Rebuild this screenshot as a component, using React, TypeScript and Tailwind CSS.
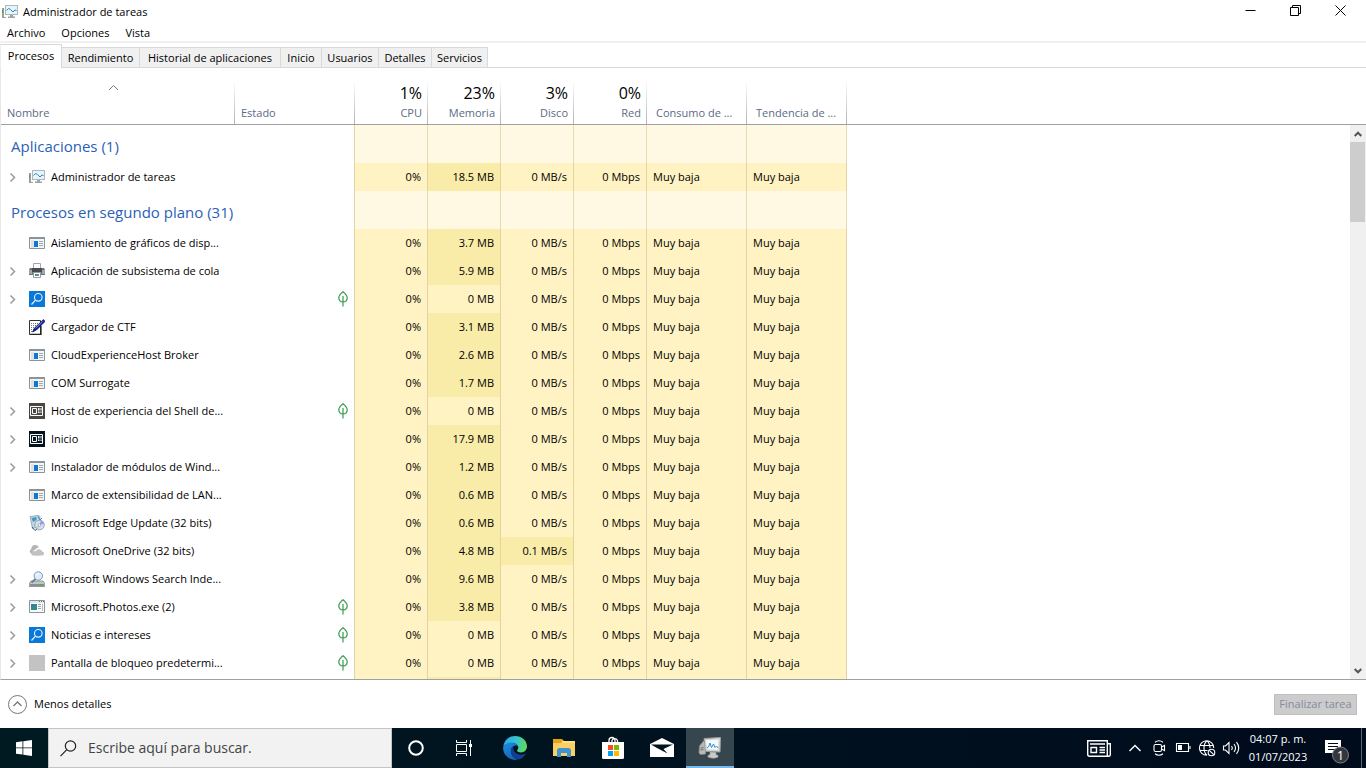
import { useState, type ReactNode } from 'react';
import clsx from 'clsx';

type IconName =
  | 'taskmgr' | 'app' | 'printer' | 'search' | 'ctf' | 'shell' | 'start'
  | 'update' | 'cloud' | 'indexer' | 'photos' | 'blank';

type Process = {
  name: string;
  icon: IconName;
  expandable?: boolean;
  suspended?: boolean;
  memory: string;
  disk?: string;
};

const MENUS = ['Archivo', 'Opciones', 'Vista'];

const TABS = [
  { label: 'Procesos', width: 'w-[62px]' },
  { label: 'Rendimiento', width: 'w-[78px]' },
  { label: 'Historial de aplicaciones', width: 'w-[141px]' },
  { label: 'Inicio', width: 'w-[41px]' },
  { label: 'Usuarios', width: 'w-[57px]' },
  { label: 'Detalles', width: 'w-[53px]' },
  { label: 'Servicios', width: 'w-[56px]' },
];

const USAGE = [
  { total: '1%', label: 'CPU' },
  { total: '23%', label: 'Memoria' },
  { total: '3%', label: 'Disco' },
  { total: '0%', label: 'Red' },
];

const APPS: Process[] = [
  { name: 'Administrador de tareas', icon: 'taskmgr', expandable: true, memory: '18.5 MB' },
];

const BACKGROUND: Process[] = [
  { name: 'Aislamiento de gráficos de disp...', icon: 'app', memory: '3.7 MB' },
  { name: 'Aplicación de subsistema de cola', icon: 'printer', expandable: true, memory: '5.9 MB' },
  { name: 'Búsqueda', icon: 'search', expandable: true, suspended: true, memory: '0 MB' },
  { name: 'Cargador de CTF', icon: 'ctf', memory: '3.1 MB' },
  { name: 'CloudExperienceHost Broker', icon: 'app', memory: '2.6 MB' },
  { name: 'COM Surrogate', icon: 'app', memory: '1.7 MB' },
  { name: 'Host de experiencia del Shell de...', icon: 'shell', expandable: true, suspended: true, memory: '0 MB' },
  { name: 'Inicio', icon: 'start', expandable: true, memory: '17.9 MB' },
  { name: 'Instalador de módulos de Wind...', icon: 'app', expandable: true, memory: '1.2 MB' },
  { name: 'Marco de extensibilidad de LAN...', icon: 'app', memory: '0.6 MB' },
  { name: 'Microsoft Edge Update (32 bits)', icon: 'update', memory: '0.6 MB' },
  { name: 'Microsoft OneDrive (32 bits)', icon: 'cloud', memory: '4.8 MB', disk: '0.1 MB/s' },
  { name: 'Microsoft Windows Search Inde...', icon: 'indexer', expandable: true, memory: '9.6 MB' },
  { name: 'Microsoft.Photos.exe (2)', icon: 'photos', expandable: true, suspended: true, memory: '3.8 MB' },
  { name: 'Noticias e intereses', icon: 'search', expandable: true, suspended: true, memory: '0 MB' },
  { name: 'Pantalla de bloqueo predetermi...', icon: 'blank', expandable: true, suspended: true, memory: '0 MB' },
];

function ProcessIcon({ name }: { name: IconName }) {
  return (
    <svg className="h-4 w-4 shrink-0" viewBox="0 0 16 16" aria-hidden="true">
      {name === 'taskmgr' && (
        <>
          <path d="M0 4h2v10H0z" fill="#9aa197" />
          <path d="M0 6h1v3H0z" fill="#4f9a58" />
          <path d="M2 13h2v1H2z" fill="#9aa197" />
          <path d="M3 1h13v10H3z" fill="#b3b6b8" />
          <path d="M4 2h11v8H4z" fill="#e4f6fc" />
          <path d="m4.500 6.500 2-2 2 1 2.500 2.500 2-2 1.500.5" fill="none" stroke="#2a86b5" />
          <path d="M8 11h3v1.500h2V14H6v-1.500h2z" fill="#a1a4a6" />
        </>
      )}
      {name === 'app' && (
        <>
          <path d="M.5 2.500h15v11H.5z" fill="#f3f4f5" stroke="#8b949b" />
          <path d="M0 2h16v2H0z" fill="#8b949b" />
          <path d="M2 5h3v8H2z" fill="#dfe3e6" />
          <path d="M5 6h4v6H5z" fill="#0f78d0" />
          <path d="M10 6.500h4M10 8.500h4M10 10.500h4" stroke="#a4abb0" />
        </>
      )}
      {name === 'printer' && (
        <>
          <path d="M4.500.5h7v5h-7z" fill="#fafafa" stroke="#a5a5a5" />
          <path d="M1 5h14l1 2v5H0V7z" fill="#6f7276" />
          <path d="M0 7h3v4H0zM13 7h3v4h-3z" fill="#a3a6a9" />
          <path d="M3 5h10v4H3z" fill="#484b4f" />
          <path d="M4.500 9.500h7v5h-7z" fill="#fff" stroke="#9a9a9a" />
          <path d="M6 11h2v2H6z" fill="#2f9e8b" />
          <path d="M8 11h2v2H8z" fill="#5a8fd0" />
        </>
      )}
      {name === 'search' && (
        <>
          <path d="M0 0h16v16H0z" fill="#0a78d7" />
          <circle cx="9.300" cy="6.300" r="3.800" fill="none" stroke="#e9f5ff" strokeWidth="1.100" />
          <path d="m6.500 9.200-4 4.300" stroke="#e9f5ff" strokeWidth="1.200" />
        </>
      )}
      {name === 'ctf' && (
        <>
          <path d="M.5 1.500h11v14H.5z" fill="#fff" stroke="#333" />
          <path d="M2 4.500h8M2 6.500h7M2 8.500h6M2 10.500h4M2 12.500h3" stroke="#777" strokeDasharray="1 1" />
          <path d="M12 7v8.500H1" fill="none" stroke="#222" strokeWidth="1.300" />
          <path d="M14.500.5 16 2.500 7.500 11 3.500 13l2-4z" fill="#15259e" stroke="#0a1045" strokeWidth=".7" />
          <path d="m13.500 2.500-7 6.700" stroke="#6f8cf0" />
        </>
      )}
      {(name === 'shell' || name === 'start') && (
        <>
          <path d="M0 0h16v16H0z" fill={name === 'shell' ? '#4a4644' : '#03141f'} />
          <path d="M1.500 3.500h12v9h-12z" fill="none" stroke="#fff" />
          <path d="M3.500 5.500h4v5h-4z" fill="none" stroke="#fff" />
          <path d="M9 5h1.500v2.500H9zM11.500 5h1v2.500h-1zM9 8.500h1.500V10H9zM11.500 8.500h1V10h-1z" fill="#fff" />
        </>
      )}
      {name === 'update' && (
        <>
          <path d="M1 1.500 9 .5l2 1-.5 10-7 2z" fill="#c4d7e8" stroke="#7a93ad" strokeWidth=".7" />
          <path d="m2.500 3 5-1v3L4 7z" fill="#3c9fb0" />
          <path d="M9 1.500 11 5l2-2" fill="none" stroke="#3b80c4" />
          <circle cx="10.500" cy="10" r="4.800" fill="#d9dff1" stroke="#8791a8" strokeWidth=".8" />
          <path d="M10.500 10 12 5.500a5 5 0 0 1 3 3z" fill="#8f9ce6" />
          <path d="m10.500 10-4 2.500a5 5 0 0 0 2.500 2z" fill="#a4dbc0" />
          <circle cx="10.500" cy="10" r="1.300" fill="#fff" stroke="#7e8aa3" strokeWidth=".6" />
          <path d="m3 12 3 3.500L8 14" fill="none" stroke="#465879" />
        </>
      )}
      {name === 'cloud' && (
        <>
          <path d="M2 10.500a2.500 2.500 0 0 1 .3-4.500A4 4 0 0 1 10 4.500c-2.500 0-3.500 1.500-3.800 2.500C4 7 3.500 9 4 10.500z" fill="#b5b5b5" />
          <path d="M6.500 12.500a2.300 2.300 0 0 1 .4-4.600 3.500 3.500 0 0 1 6.300.7 2 2 0 0 1 .5 3.900z" fill="#c1c1c1" />
          <path d="M3.500 12.500a2 2 0 0 1 2-4h5v4z" fill="#c1c1c1" />
        </>
      )}
      {name === 'indexer' && (
        <>
          <path d="M2 10h12l2 3v2.500H0V13z" fill="#c3c6c9" stroke="#73787b" strokeWidth=".7" />
          <path d="M1 13h14v2H1z" fill="#8b9093" />
          <path d="M11 13h3v2h-3z" fill="#47b649" />
          <circle cx="9.300" cy="5" r="4.200" fill="#dceefb" stroke="#8197ae" />
          <path d="M6.500 8 2.500 11.500" stroke="#6d7f91" strokeWidth="1.800" />
          <path d="M7 4.500a2.500 2.500 0 0 1 3-1.800" fill="none" stroke="#fff" />
        </>
      )}
      {name === 'photos' && (
        <>
          <path d="M.5 1.500h15v12H.5z" fill="#fbfbfb" stroke="#8b949b" />
          <path d="M1 2h14v2H1z" fill="#e3e7ea" />
          <path d="M10 2.500h1M12 2.500h1M14 2.500h1" stroke="#6a747c" />
          <path d="M2 5h6v6H2z" fill="#2f8f86" />
          <path d="M2 5h3v3H2z" fill="#4173a8" />
          <path d="M9 5.500h3M9 7.500h3M9 9.500h3" stroke="#9ca4aa" />
          <path d="M13.500 5v7" stroke="#b9bec2" />
        </>
      )}
      {name === 'blank' && <path d="M0 0h16v16H0z" fill="#c3c3c3" />}
    </svg>
  );
}

function Leaf() {
  return (
    <svg className="h-4 w-3" viewBox="0 0 12 16" fill="none" stroke="#3a9a4c" strokeWidth="1.200" role="img" aria-label="Suspendido">
      <path d="M6 .8c2.500 2 4.200 3.600 4.200 6C10.200 9.300 8.500 11 6 11S1.800 9.300 1.800 6.800c0-2.400 1.700-4 4.200-6zM6 5v10.500" />
    </svg>
  );
}

function WindowButton({ label, children }: { label: string; children: ReactNode }) {
  return (
    <button type="button" aria-label={label} className="flex h-5 w-[45px] items-center justify-center hover:bg-gray-200">
      <svg width="11" height="11" viewBox="0 0 11 11" fill="none" stroke="#000">{children}</svg>
    </button>
  );
}

function GroupRow({ title }: { title: string }) {
  return (
    <tr className="h-[38px]">
      <th scope="rowgroup" colSpan={2} className="border-r border-[#e2d3a2] pt-1 pl-[10px] text-left text-[15px] leading-5 font-normal text-[#2b5fb8]">
        {title}
      </th>
      {[0, 1, 2, 3, 4, 5].map((i) => (
        <td key={i} className="border-r border-[#e8dbb4] bg-[#fff8e3]" />
      ))}
      <td />
    </tr>
  );
}

const cell = 'border-r border-[#e2d3a2] px-[6px] whitespace-nowrap';

function ProcessRow({ process }: { process: Process }) {
  const { name, icon, expandable, suspended, memory, disk = '0 MB/s' } = process;
  return (
    <tr className="h-7 hover:bg-[#e5f3ff]">
      <td>
        <div className="flex items-center overflow-hidden whitespace-nowrap">
          <div className="flex w-7 shrink-0 pl-2">
            {expandable && (
              <button type="button" aria-label={`Expandir ${name}`} className="text-[#9a9a9a]">
                <svg width="7" height="11" viewBox="0 0 7 11" fill="none" stroke="currentColor" strokeWidth="1.500">
                  <path d="M1.500 1.500 5.500 5.500l-4 4" />
                </svg>
              </button>
            )}
          </div>
          <ProcessIcon name={icon} />
          <span className="pl-[6px]">{name}</span>
        </div>
      </td>
      <td className="border-r border-[#e2d3a2] pr-[5px]">
        <div className="flex justify-end">{suspended && <Leaf />}</div>
      </td>
      <td className={clsx(cell, 'bg-[#fff3c4] text-right')}>0%</td>
      <td className={clsx(cell, 'text-right', memory === '0 MB' ? 'bg-[#fff3c4]' : 'bg-[#f9eba8]')}>{memory}</td>
      <td className={clsx(cell, 'text-right', disk === '0 MB/s' ? 'bg-[#fff3c4]' : 'bg-[#f9eba8]')}>{disk}</td>
      <td className={clsx(cell, 'bg-[#fff3c4] text-right')}>0 Mbps</td>
      <td className={clsx(cell, 'bg-[#fff3c4]')}>Muy baja</td>
      <td className={clsx(cell, 'bg-[#fff3c4]')}>Muy baja</td>
      <td />
    </tr>
  );
}

const head =
  'border-b border-b-[#a0a0a0] bg-linear-to-b from-white to-[#b4b4b4] bg-[length:1px_44px] bg-[position:right_bottom] bg-no-repeat pb-[3px] align-bottom font-normal text-[#5a6b85] whitespace-nowrap leading-4';

function ProcessTable() {
  return (
    <table className="w-full table-fixed border-separate border-spacing-0">
      <colgroup>
        <col className="w-[234px]" />
        <col className="w-[120px]" />
        <col className="w-[73px]" />
        <col className="w-[73px]" />
        <col className="w-[73px]" />
        <col className="w-[73px]" />
        <col className="w-[100px]" />
        <col className="w-[100px]" />
        <col />
      </colgroup>
      <thead>
        <tr className="h-[57px]">
          <th scope="col" aria-sort="ascending" className={head}>
            <button type="button" className="flex w-full flex-col pl-[6px] text-left">
              <svg className="mb-[14px] ml-[101px] text-[#7a7a7a]" width="11" height="7" viewBox="0 0 11 7" fill="none" stroke="currentColor">
                <path d="M1 6 5.500 1.500 10 6" />
              </svg>
              Nombre
            </button>
          </th>
          <th scope="col" className={clsx(head, 'pl-[6px] text-left')}>Estado</th>
          {USAGE.map(({ total, label }) => (
            <th key={label} scope="col" className={clsx(head, 'pr-[6px] text-right')}>
              <div className="pb-[2px] text-[16px] leading-5 text-black">{total}</div>
              {label}
            </th>
          ))}
          <th scope="col" className={clsx(head, 'pl-[9px] text-left')}>Consumo de ...</th>
          <th scope="col" className={clsx(head, 'pl-[9px] text-left')}>Tendencia de ...</th>
          <td className="border-b border-[#a0a0a0]" />
        </tr>
      </thead>
      <tbody>
        <GroupRow title="Aplicaciones (1)" />
        {APPS.map((p) => <ProcessRow key={p.name} process={p} />)}
        <GroupRow title="Procesos en segundo plano (31)" />
        {BACKGROUND.map((p) => <ProcessRow key={p.name} process={p} />)}
        {/* top edge of the next row */}
        <tr className="h-7">
          <td />
          <td className={cell} />
          <td className={clsx(cell, 'bg-[#fff3c4]')} />
          <td className={clsx(cell, 'bg-[#f9eba8]')} />
          <td className={clsx(cell, 'bg-[#fff3c4]')} />
          <td className={clsx(cell, 'bg-[#fff3c4]')} />
          <td className={clsx(cell, 'bg-[#fff3c4]')} />
          <td className={clsx(cell, 'bg-[#fff3c4]')} />
          <td />
        </tr>
      </tbody>
    </table>
  );
}

function Scrollbar() {
  return (
    <div className="flex w-4 shrink-0 flex-col">
      <div className="h-[57px] border-b border-[#a0a0a0]" />
      <div className="flex flex-1 flex-col bg-[#f0f0f0]">
        <button type="button" aria-label="Subir" className="flex h-[17px] items-center justify-center text-[#555]">
          <svg width="8" height="6" viewBox="0 0 8 6" fill="none" stroke="currentColor" strokeWidth="2"><path d="m.7 5 3.300-3.300L7.300 5" /></svg>
        </button>
        <div className="mr-px h-20 bg-[#cdcdcd]" />
        <button type="button" aria-label="Bajar" className="mt-auto flex h-[17px] items-center justify-center text-[#555]">
          <svg width="8" height="6" viewBox="0 0 8 6" fill="none" stroke="currentColor" strokeWidth="2"><path d="M.7 1 4 4.300 7.300 1" /></svg>
        </button>
      </div>
    </div>
  );
}

function EdgeLogo() {
  return (
    <svg width="24" height="24" viewBox="0 0 24 24" aria-hidden="true">
      <defs>
        <linearGradient id="edge-top" x1="0" y1=".3" x2="1" y2=".5">
          <stop offset="0" stopColor="#2ba8e6" />
          <stop offset=".5" stopColor="#34c3d3" />
          <stop offset="1" stopColor="#62d957" />
        </linearGradient>
        <linearGradient id="edge-left" x1="0" y1="0" x2=".6" y2="1">
          <stop offset="0" stopColor="#1d8fe0" />
          <stop offset="1" stopColor="#1464b8" />
        </linearGradient>
      </defs>
      <path d="M.2 10.800C1 4.500 6 0 12 0c6.800 0 12 4.700 12 10.200 0 3.700-2.700 6.200-6 6.200-2.600 0-4-.9-4-1.800 0-.8 1.300-1.200 1.300-3.200 0-2.400-2.700-4.300-6.100-4.300-4 0-7.400 1.700-9 3.700z" fill="url(#edge-top)" />
      <path d="M.1 11.300C1 8.500 4.600 6.600 8.300 6.600c3.700 0 6.500 2 7 4.500-1-1.500-2.600-1.800-3.700-1.300C8.800 10.600 7.600 13 8 16c.4 3.500 3.200 6.700 6.800 7.600A12 12 0 0 1 .1 11.300z" fill="url(#edge-left)" />
      <path d="M11.600 9.800C8.800 10.600 7.600 13 8 16c.5 4 3.800 7.400 7.700 7.400 2.900-.6 5.500-2.700 6.800-5.100.2-.4-.1-.7-.5-.5-5 2.300-10.500-.1-11.600-4.300-.3-1.500.1-2.900 1.200-3.700z" fill="#123f91" />
    </svg>
  );
}

function FolderIcon() {
  return (
    <svg width="22" height="20" viewBox="0 0 22 20" aria-hidden="true">
      <path d="M0 1h9l2 2h11v15H0z" fill="#e8a317" />
      <path d="M9 3h13v2H9z" fill="#ffdf8c" />
      <path d="M0 5h22v13H0z" fill="#fad061" />
      <path d="M4 19v-6.500C4 11 5 10 6.500 10h9c1.500 0 2.500 1 2.500 2.500V19h-4v-4H8v4z" fill="#3f93d3" />
    </svg>
  );
}

function StoreIcon() {
  return (
    <svg width="24" height="24" viewBox="0 0 24 24" aria-hidden="true">
      <path d="M8 7V4.500a3 3 0 0 1 6 0V7M11 7V4.500a3 3 0 0 1 5.500 0V7" fill="none" stroke="#fff" strokeWidth="1.300" />
      <path d="M1 6h22v15.500q0 1.500-1.500 1.500h-19Q1 23 1 21.500z" fill="#fff" />
      <path d="M7 9h5v5H7z" fill="#f25022" />
      <path d="M13 9h5v5h-5z" fill="#7fba00" />
      <path d="M7 15h5v5H7z" fill="#00a4ef" />
      <path d="M13 15h5v5h-5z" fill="#ffb900" />
    </svg>
  );
}

function MailIcon() {
  return (
    <svg width="24" height="20" viewBox="0 0 24 20" aria-hidden="true">
      <path d="M0 6 12 0l12 6v13H0z" fill="#fff" />
      <path d="M1 6.500h22l-9.500 4.500 4 4.500L7 10z" fill="#00141f" />
    </svg>
  );
}

function MonitorIcon() {
  return (
    <svg width="24" height="22" viewBox="0 0 24 22" aria-hidden="true">
      <path d="m1.500 9 4-5 2 1v12l-5 .5L1 16z" fill="#b9bab8" stroke="#8e8f8d" strokeWidth=".7" />
      <path d="m2.500 11 3-.5M2.500 13l3-.5" stroke="#70716f" />
      <path d="m6 1.500 16.500-1L22 15l-14.500-.7z" fill="#d5d7d7" stroke="#9b9d9d" />
      <path d="m8 3.200 12.500-.7-.4 10.200-11-.4z" fill="#f1fafd" />
      <path d="m9 11 1.500-1L12 6l1.500 4.500L15.500 7l1.500 3.500 1.500-1.500 1.500 2" fill="none" stroke="#3c8fc4" />
      <path d="m12 15 6 .3v2.500c2 0 2.500 1 2 2.200-3 1.700-8 1.500-10 0-.5-1.200 0-2 2-2.200z" fill="#c9cbca" stroke="#959796" strokeWidth=".6" />
    </svg>
  );
}

function TaskButton({ label, active, children }: { label: string; active?: boolean; children: ReactNode }) {
  return (
    <button
      type="button"
      aria-label={label}
      className={clsx(
        'flex h-10 items-center justify-center',
        active ? 'w-12 border-y-2 border-t-transparent border-b-[#76b9ed] bg-[#36464e]' : 'w-[49px] hover:bg-white/10'
      )}
    >
      {children}
    </button>
  );
}

function TrayButton({ label, children }: { label: string; children: ReactNode }) {
  return (
    <button type="button" aria-label={label} className="flex h-10 w-6 items-center justify-center hover:bg-white/10">
      <svg width="18" height="18" viewBox="0 0 18 18" fill="none" stroke="#fff" strokeWidth="1.100">{children}</svg>
    </button>
  );
}

function Taskbar() {
  return (
    <footer className="flex h-10 shrink-0 bg-linear-to-r from-[#001a22] via-[#00121f] to-[#000b1c] text-white">
      <button type="button" aria-label="Inicio" className="flex w-12 shrink-0 items-center justify-center">
        <svg width="16" height="16" viewBox="0 0 16 16" fill="#fff">
          <path d="M0 2.200 6.500 1.300v6.200H0zM7.300 1.200 16 0v7.500H7.300zM0 8.300h6.500v6.300L0 13.700zM7.300 8.300H16V16l-8.700-1.200z" />
        </svg>
      </button>
      <label className="flex w-[344px] items-center border border-[#c4c4c4] bg-[#f2f2f2]">
        <svg className="mr-[11px] ml-[11px] shrink-0" width="17" height="17" viewBox="0 0 17 17" fill="none" stroke="#222" strokeWidth="1.200">
          <circle cx="10.500" cy="6" r="5.200" />
          <path d="m6.800 9.700-6.300 6.500" />
        </svg>
        <input
          type="text"
          aria-label="Buscar"
          placeholder="Escribe aquí para buscar."
          className="min-w-0 flex-1 bg-transparent text-[14px] text-[#333] outline-none placeholder:text-[#444]"
        />
      </label>
      <button type="button" aria-label="Cortana" className="flex w-12 items-center justify-center">
        <svg width="18" height="18" viewBox="0 0 18 18" fill="none">
          <circle cx="9" cy="9" r="6.800" stroke="#fff" strokeWidth="2" />
        </svg>
      </button>
      <button type="button" aria-label="Vista de tareas" className="mr-[2px] flex w-12 items-center justify-center">
        <svg width="17" height="16" viewBox="0 0 17 16" fill="none" stroke="#fff">
          <path d="M.5 0v2.500h10V0M.5 16v-2.500h10V16M.5 4.500h10v7H.5zM14.500 0v16" />
          <path d="M13 4h3v3h-3z" fill="#fff" stroke="none" />
        </svg>
      </button>
      <TaskButton label="Microsoft Edge"><EdgeLogo /></TaskButton>
      <TaskButton label="Explorador de archivos"><FolderIcon /></TaskButton>
      <TaskButton label="Microsoft Store"><StoreIcon /></TaskButton>
      <TaskButton label="Correo"><MailIcon /></TaskButton>
      <TaskButton label="Administrador de tareas" active><MonitorIcon /></TaskButton>

      <div className="ml-auto flex items-center">
        <button type="button" aria-label="Noticias" className="mr-3 flex">
          <svg width="24" height="17" viewBox="0 0 24 17" fill="none" stroke="#fff" strokeWidth="1.400">
            <path d="M.7.7h19.600v15.600H2.500q-1.800 0-1.800-1.800zM20.300 3.700h3v10.800q0 1.800-1.500 1.800h-1.500" />
            <path d="M3 4h15M12.500 7.500H18M12.500 10H18M12.500 12.500H18M4 7.500h5.500v5H4z" />
          </svg>
        </button>
        <TrayButton label="Mostrar iconos ocultos"><path d="m3.500 12 5.500-5.500 5.500 5.500" strokeWidth="1.400" /></TrayButton>
        <TrayButton label="Reunirse ahora">
          <rect x="4" y="5.500" width="7.500" height="7" rx="1.500" />
          <path d="m11.500 8 3-1.500v5l-3-1.500M5 3.200q4-3 8 0M5 14.800q4 3 8 0" />
        </TrayButton>
        <TrayButton label="Batería">
          <path d="M2.500 4.500h12v8h-12zM16 7v3" />
          <path d="M4 6h4v5H4z" fill="#fff" stroke="none" />
        </TrayButton>
        <TrayButton label="Red">
          <path d="M15.800 9A7.200 7.200 0 1 0 9 16.200M9 1.800C5 5 5 13 9 16.200M9 1.800c2 1.700 3 4.200 3 7.200M2 6.500h13.500M2 11.500h7.500" />
          <circle cx="13.500" cy="13.500" r="3.300" />
          <path d="m11.300 11.300 4.400 4.400" />
        </TrayButton>
        <TrayButton label="Volumen">
          <path d="M1.500 7h2l3.500-3.500v11L3.500 11h-2zM9.500 7q1.500 2 0 4M12 5q3 4 0 8M14.500 3.200q4.500 5.800 0 11.600" />
        </TrayButton>
        <button type="button" className="w-[70px] text-center text-[11px] leading-[18px] whitespace-nowrap">
          04:07 p. m.
          <br />
          01/07/2023
        </button>
        <button type="button" aria-label="Notificaciones" className="flex h-10 w-[49px] items-end justify-center border-r border-[#5d6570] pb-1">
          <svg width="26" height="26" viewBox="0 0 26 26">
            <path d="M1 2h16v13h-4l-4 3.500V15H1z" fill="#fff" />
            <path d="M4 5.500h10M4 8.500h10M4 11.500h7" stroke="#000b1c" />
            <circle cx="16.500" cy="17" r="8" fill="#33373c" stroke="#7d8288" />
            <text x="16.500" y="21.500" textAnchor="middle" fontSize="13" fill="#fff">1</text>
          </svg>
        </button>
        <div className="w-1" />
      </div>
    </footer>
  );
}

export default function App() {
  const [tab, setTab] = useState('Procesos');

  return (
    <div className="flex h-screen flex-col overflow-hidden bg-white font-['Open_Sans','Noto_Sans',sans-serif] text-[11px] leading-4 text-black">
      <header className="shrink-0">
        <div className="flex h-[25px] items-start justify-between pr-[3px]">
          <div className="flex items-center gap-[5px] pt-1 pl-[2px]">
            <ProcessIcon name="taskmgr" />
            <h1>Administrador de tareas</h1>
          </div>
          <div className="flex">
            <WindowButton label="Minimizar"><path d="M.5 5.500h10" /></WindowButton>
            <WindowButton label="Restaurar"><path d="M.5 2.500h8v8h-8zM2.500 2.500v-2h8v8h-2" /></WindowButton>
            <WindowButton label="Cerrar"><path d="m.5.5 10 10M10.500.5l-10 10" /></WindowButton>
          </div>
        </div>
        <nav className="flex h-[18px] gap-4 border-b-2 border-[#f0f0f0] pl-[7px]">
          {MENUS.map((m) => <button key={m} type="button" className="h-4">{m}</button>)}
        </nav>
      </header>

      <div role="tablist" className="flex h-[25px] shrink-0 items-end border-b border-[#d9d9d9]">
        {TABS.map(({ label, width }) => (
          <button
            key={label}
            type="button"
            role="tab"
            aria-selected={tab === label}
            onClick={() => setTab(label)}
            className={clsx(
              'border border-b-0 border-[#d9d9d9] text-center whitespace-nowrap',
              width,
              tab === label ? '-mb-px h-6 border-l-[#eee] bg-white pb-[2px]' : 'h-5 border-l-0 bg-[#f0f0f0]'
            )}
          >
            {label}
          </button>
        ))}
      </div>

      <main className="flex min-h-0 flex-1 overflow-hidden border-b border-l border-b-[#a0a0a0] border-l-[#e8e8e8]">
        <div className="min-w-0 flex-1">
          <ProcessTable />
        </div>
        <Scrollbar />
      </main>

      <section className="flex h-12 shrink-0 items-center justify-between pr-[9px] pl-2">
        <button type="button" className="flex items-center gap-[7px]">
          <svg width="19" height="19" viewBox="0 0 19 19" fill="none" stroke="#777">
            <circle cx="9.500" cy="9.500" r="9" />
            <path d="m5.500 11 4-4 4 4" strokeWidth="1.300" />
          </svg>
          Menos detalles
        </button>
        <button type="button" disabled className="h-[21px] w-[83px] border border-[#bfbfbf] bg-[#cccccc] whitespace-nowrap text-[#838b9c]">
          Finalizar tarea
        </button>
      </section>

      <Taskbar />
    </div>
  );
}
